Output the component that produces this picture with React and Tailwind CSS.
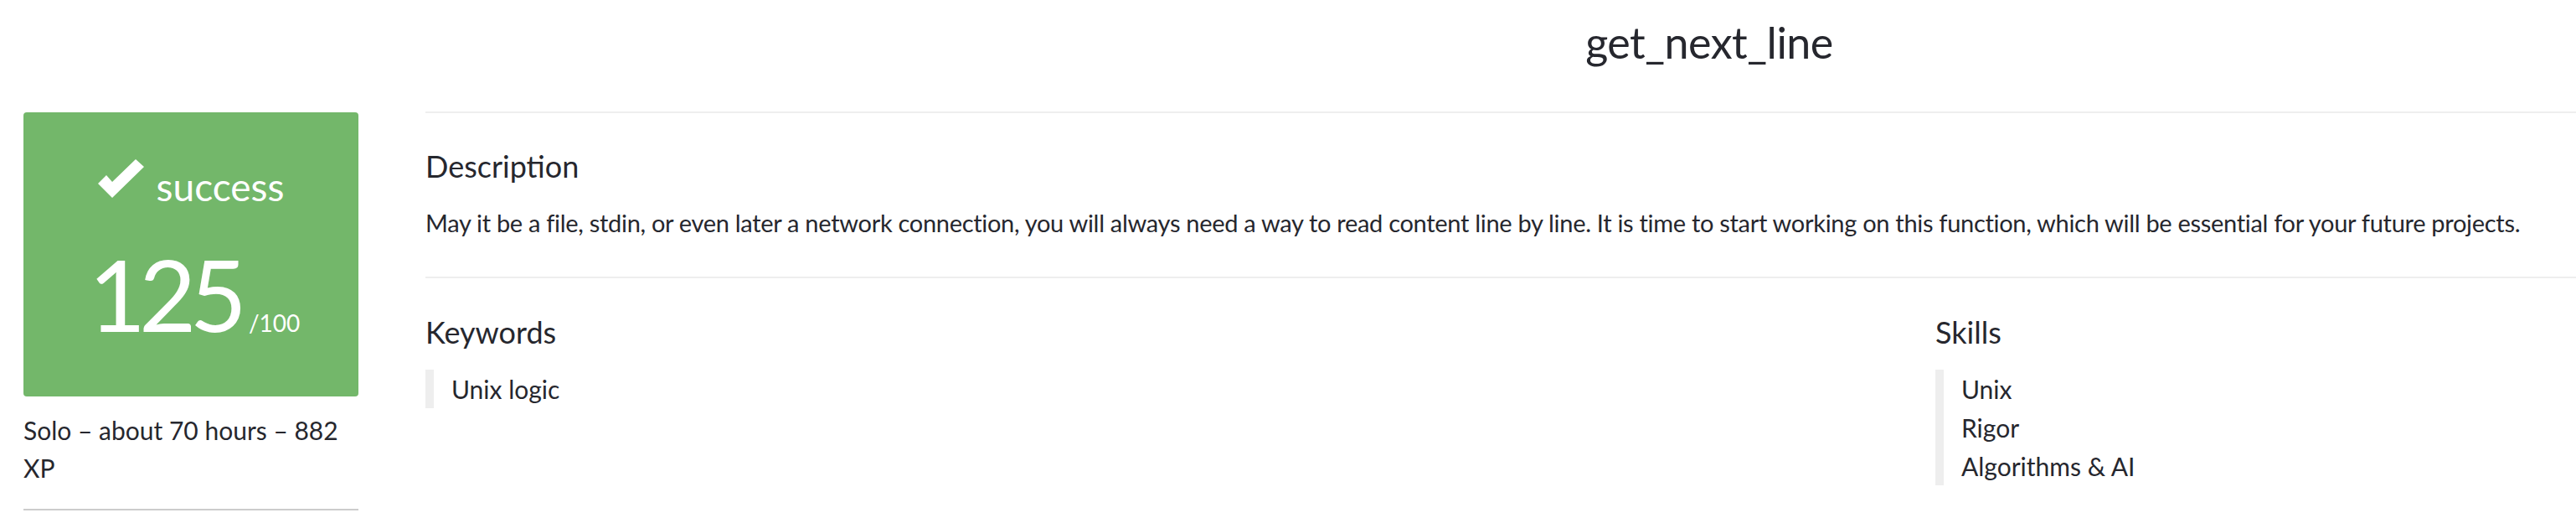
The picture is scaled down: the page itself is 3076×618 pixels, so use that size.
import React from "react";

const keywords = ["Unix logic"];
const skills = ["Unix", "Rigor", "Algorithms & AI"];

function CheckMark() {
  return (
    <svg viewBox="0 0 55 46" className="w-[55px] h-[46px]" fill="currentColor">
      <polygon points="0,29 10,19 17,27 45,0 55,9 17,46" />
    </svg>
  );
}

function TagList({ items }) {
  return (
    <div className="border-l-[10px] border-[#eeeeee] pl-[21px]">
      {items.map((item) => (
        <div key={item} className="text-[30px] leading-[46px]">
          {item}
        </div>
      ))}
    </div>
  );
}

export default function App() {
  return (
    <div
      className="w-full h-[618px] overflow-hidden bg-white text-[#26272e]"
      style={{ fontFamily: "Lato, 'Open Sans', sans-serif" }}
    >
      <div className="flex gap-[80px] pl-[28px]">
        {/* Sidebar */}
        <aside className="w-[400px] shrink-0 pt-[134px]">
          <div className="h-[339px] rounded-[4px] bg-[#73b76a] text-white flex flex-col items-center pt-[56px]">
            <div className="flex items-start gap-[15px]">
              <CheckMark />
              <span className="mt-[10px] text-[46px] leading-none">success</span>
            </div>
            <div className="flex items-baseline mt-[46px] pl-[8px]">
              <span className="text-[118px] leading-none tracking-[-8px]">125</span>
              <span className="text-[28px] leading-none ml-[10px]">/100</span>
            </div>
          </div>
          <p className="mt-[18px] text-[30px] leading-[45px]">
            Solo – about 70 hours – 882 XP
          </p>
          <div className="mt-[26px] h-[2px] bg-[#cccccc]" />
        </aside>

        {/* Main */}
        <main className="w-[3066px] shrink-0">
          <div className="pt-[24px] pb-[57px] border-b-2 border-[#eeeeee] text-center">
            <h1 className="text-[52px] leading-none tracking-[-0.5px]">get_next_line</h1>
          </div>

          <section className="border-b-2 border-[#eeeeee] pt-[45px] pb-[50px]">
            <h4 className="text-[36px] leading-none">Description</h4>
            <p className="mt-[35px] text-[29px] leading-none tracking-[-0.3px] whitespace-nowrap">
              May it be a file, stdin, or even later a network connection, you will always need a way to read content line by line. It is time to start working on this function, which will be essential for your future projects.
            </p>
          </section>

          <div className="flex pt-[46px]">
            <section className="w-[1803px] shrink-0">
              <h4 className="text-[36px] leading-none">Keywords</h4>
              <div className="mt-[27px]">
                <TagList items={keywords} />
              </div>
            </section>
            <section className="flex-1">
              <h4 className="text-[36px] leading-none">Skills</h4>
              <div className="mt-[27px]">
                <TagList items={skills} />
              </div>
            </section>
          </div>
        </main>
      </div>
    </div>
  );
}
